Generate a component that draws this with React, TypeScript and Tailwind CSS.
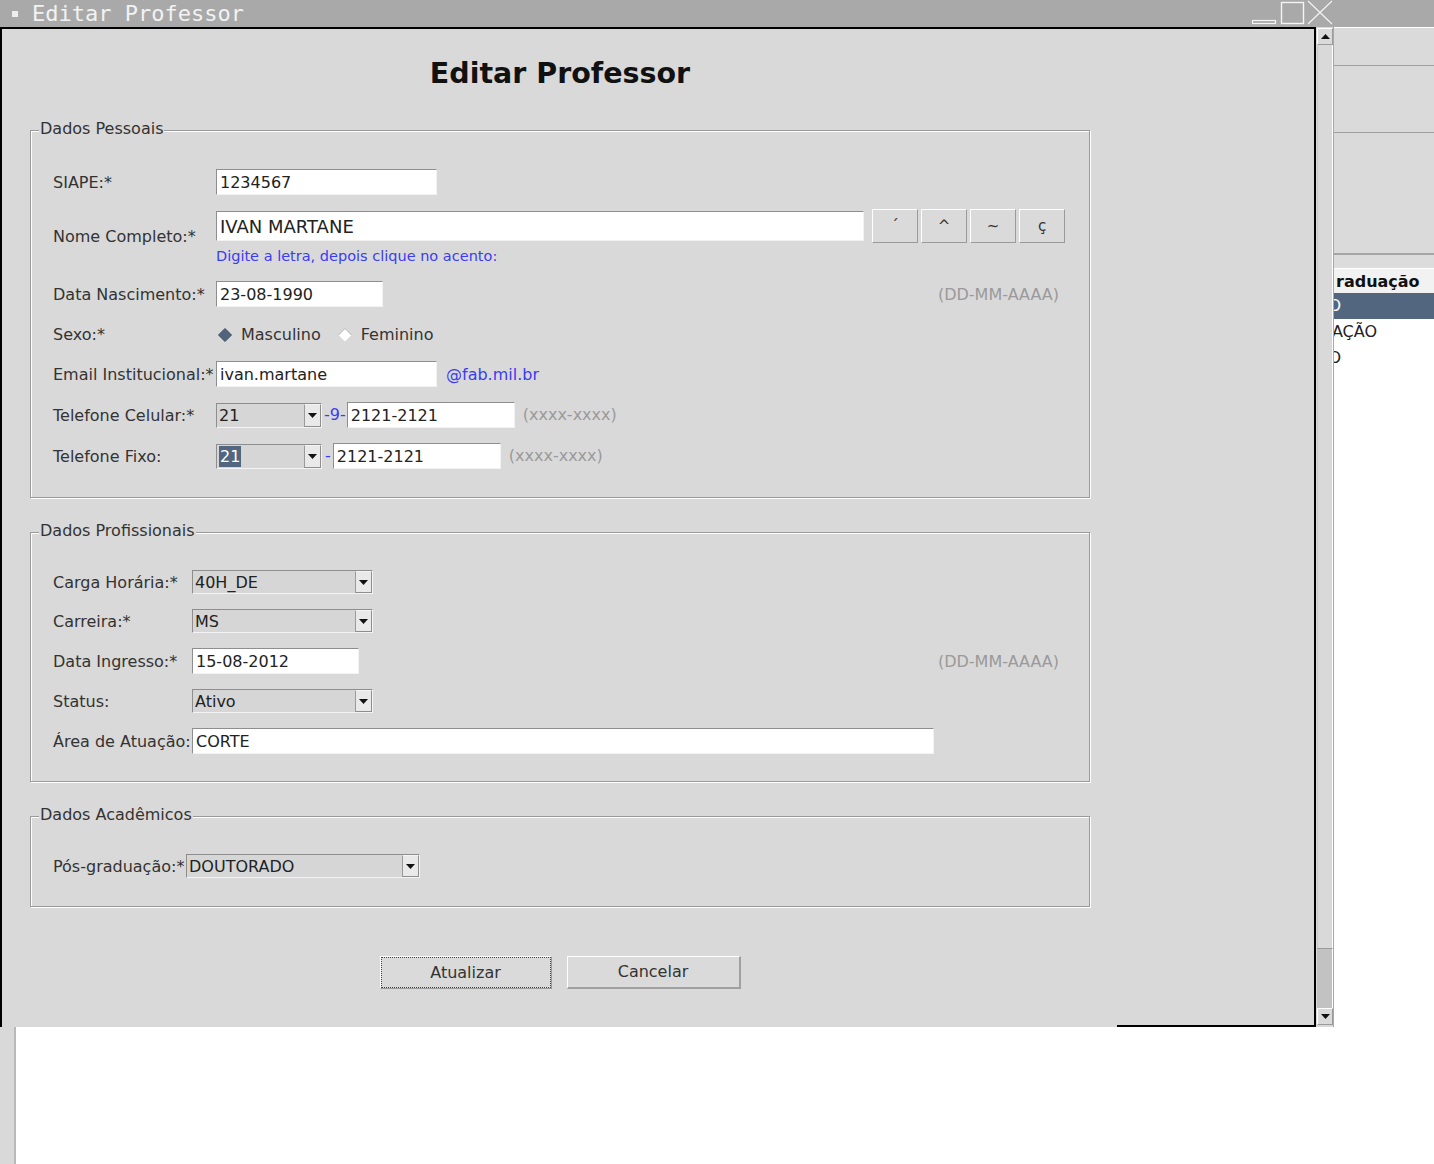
import React from "react";

const Label = ({ className, children }: { className: string; children: React.ReactNode }) => (
  <div className={`shrink-0 text-[16px] text-[#333] whitespace-nowrap pt-[1px] ${className}`}>{children}</div>
);

const Field = ({ className, children }: { className: string; children?: React.ReactNode }) => (
  <div
    className={`flex items-center bg-white border border-t-[#8e8e8e] border-l-[#8e8e8e] border-b-[#f2f2f2] border-r-[#f2f2f2] pl-[3px] pt-[1px] text-[#222] whitespace-nowrap overflow-hidden ${className}`}
  >
    {children}
  </div>
);

const Arrow = ({ up }: { up?: boolean }) => (
  <svg width="9" height="5" viewBox="0 0 9 5">
    <path d={up ? "M0 5h9L4.5 0z" : "M0 0h9L4.5 5z"} fill="#111" />
  </svg>
);

const Combo = ({ className, children }: { className: string; children: React.ReactNode }) => (
  <div
    className={`flex bg-[#d6d6d6] border border-t-[#8e8e8e] border-l-[#8e8e8e] border-b-[#f4f4f4] border-r-[#f4f4f4] ${className}`}
  >
    <div className="flex-1 flex items-center pl-[2px] pt-[1px] text-[16px] text-[#222] overflow-hidden whitespace-nowrap">
      {children}
    </div>
    <div className="w-[17px] flex items-center justify-center bg-[#e9e9e9] border border-[#8e8e8e] border-t-[#f4f4f4] border-l-[#9a9a9a]">
      <Arrow />
    </div>
  </div>
);

const Hint = ({ children }: { children: React.ReactNode }) => (
  <span className="text-[16px] text-[#9a9a9a] whitespace-nowrap">{children}</span>
);

const Blue = ({ className = "", children }: { className?: string; children: React.ReactNode }) => (
  <span className={`text-[#3c3cf0] whitespace-nowrap ${className}`}>{children}</span>
);

const Group = ({
  title,
  className,
  children,
}: {
  title: string;
  className: string;
  children: React.ReactNode;
}) => (
  <div
    className={`relative border border-[#9a9a9a] shadow-[inset_1px_1px_0_#ffffff,1px_1px_0_#ffffff] pl-[22px] ${className}`}
  >
    <span className="absolute left-[8px] top-[-12px] px-[1px] bg-[#d9d9d9] text-[16px] leading-[20px] text-[#333]">
      {title}
    </span>
    {children}
  </div>
);

const Diamond = ({ on }: { on?: boolean }) => (
  <svg width="16" height="16" viewBox="0 0 16 16">
    {on ? (
      <path d="M8 1.5L14.5 8L8 14.5L1.5 8Z" fill="#51647d" stroke="#3f4f63" strokeWidth="1" />
    ) : (
      <>
        <path d="M8 1.5L14.5 8L8 14.5L1.5 8Z" fill="#ffffff" />
        <path d="M1.5 8L8 1.5L14.5 8" fill="none" stroke="#b5b5b5" strokeWidth="1" />
      </>
    )}
  </svg>
);

const AccentButton = ({ children }: { children: React.ReactNode }) => (
  <div className="w-[46px] h-[34px] flex items-center justify-center bg-[#dadada] border border-t-white border-l-white border-b-[#9a9a9a] border-r-[#9a9a9a] text-[15px] text-[#333]">
    {children}
  </div>
);

const Dialog = () => (
  <div className="w-[1316px] h-[1000px] flex flex-col bg-[#d9d9d9] border-l-2 border-t-2 border-r-2 border-black">
    <div className="flex-1 w-[1116px] px-[28px] pt-[28px]">
      <h1 className="h-[34px] leading-[34px] text-center text-[28.5px] font-bold text-[#111]">Editar Professor</h1>

      <Group title="Dados Pessoais" className="mt-[39px] pt-[38px] pb-[28px]">
        <div className="flex items-center h-[26px]">
          <Label className="w-[163px]">SIAPE:*</Label>
          <Field className="w-[221px] h-[26px] text-[16px]">1234567</Field>
        </div>

        <div className="flex items-center mt-[14px] h-[55px]">
          <Label className="w-[163px]">Nome Completo:*</Label>
          <div className="flex flex-col h-full">
            <div className="flex items-center h-[34px]">
              <Field className="w-[648px] h-[30px] text-[18px]">IVAN MARTANE</Field>
              <div className="flex ml-[8px] gap-[3px]">
                <AccentButton>´</AccentButton>
                <AccentButton>^</AccentButton>
                <AccentButton>~</AccentButton>
                <AccentButton>ç</AccentButton>
              </div>
            </div>
            <div className="mt-[5px] h-[17px] leading-[17px] text-[14.5px]">
              <Blue>Digite a letra, depois clique no acento:</Blue>
            </div>
          </div>
        </div>

        <div className="flex items-center mt-[17px] h-[26px] pr-[30px]">
          <Label className="w-[163px]">Data Nascimento:*</Label>
          <Field className="w-[167px] h-[26px] text-[16px]">23-08-1990</Field>
          <div className="ml-auto pt-[1px]">
            <Hint>(DD-MM-AAAA)</Hint>
          </div>
        </div>

        <div className="flex items-center mt-[16px] h-[22px]">
          <Label className="w-[163px]">Sexo:*</Label>
          <div className="flex items-center text-[16px] text-[#333] pt-[1px]">
            <span className="ml-[1px]">
              <Diamond on />
            </span>
            <span className="ml-[8px]">Masculino</span>
            <span className="ml-[16px]">
              <Diamond />
            </span>
            <span className="ml-[8px]">Feminino</span>
          </div>
        </div>

        <div className="flex items-center mt-[16px] h-[26px]">
          <Label className="w-[163px]">Email Institucional:*</Label>
          <Field className="w-[221px] h-[26px] text-[16px]">ivan.martane</Field>
          <Blue className="ml-[9px] text-[16px] pt-[1px]">@fab.mil.br</Blue>
        </div>

        <div className="flex items-center mt-[15px] h-[26px]">
          <Label className="w-[163px]">Telefone Celular:*</Label>
          <Combo className="w-[106px] h-[25px]">21</Combo>
          <Blue className="ml-[2px] text-[16px]">-9-</Blue>
          <Field className="ml-[1px] w-[168px] h-[26px] text-[16px]">2121-2121</Field>
          <span className="ml-[8px]">
            <Hint>(xxxx-xxxx)</Hint>
          </span>
        </div>

        <div className="flex items-center mt-[15px] h-[26px]">
          <Label className="w-[163px]">Telefone Fixo:</Label>
          <Combo className="w-[106px] h-[25px]">
            <span className="bg-[#52667f] text-white px-[1px] leading-[21px]">21</span>
          </Combo>
          <Blue className="ml-[3px] text-[16px]">-</Blue>
          <Field className="ml-[2px] w-[168px] h-[26px] text-[16px]">2121-2121</Field>
          <span className="ml-[8px]">
            <Hint>(xxxx-xxxx)</Hint>
          </span>
        </div>
      </Group>

      <Group title="Dados Profissionais" className="mt-[34px] pt-[37px] pb-[27px]">
        <div className="flex items-center h-[24px]">
          <Label className="w-[139px]">Carga Horária:*</Label>
          <Combo className="w-[181px] h-[24px]">40H_DE</Combo>
        </div>
        <div className="flex items-center mt-[15px] h-[24px]">
          <Label className="w-[139px]">Carreira:*</Label>
          <Combo className="w-[181px] h-[24px]">MS</Combo>
        </div>
        <div className="flex items-center mt-[15px] h-[26px] pr-[30px]">
          <Label className="w-[139px]">Data Ingresso:*</Label>
          <Field className="w-[167px] h-[26px] text-[16px]">15-08-2012</Field>
          <div className="ml-auto pt-[1px]">
            <Hint>(DD-MM-AAAA)</Hint>
          </div>
        </div>
        <div className="flex items-center mt-[15px] h-[24px]">
          <Label className="w-[139px]">Status:</Label>
          <Combo className="w-[181px] h-[24px]">Ativo</Combo>
        </div>
        <div className="flex items-center mt-[15px] h-[26px]">
          <Label className="w-[139px]">Área de Atuação:</Label>
          <Field className="w-[742px] h-[26px] text-[16px]">CORTE</Field>
        </div>
      </Group>

      <Group title="Dados Acadêmicos" className="mt-[34px] pt-[37px] pb-[28px]">
        <div className="flex items-center h-[24px]">
          <Label className="w-[133px]">Pós-graduação:*</Label>
          <Combo className="w-[234px] h-[24px]">DOUTORADO</Combo>
        </div>
      </Group>

      <div className="flex justify-center gap-[15px] mt-[49px]">
        <div className="w-[172px] h-[33px] bg-[#dadada] border border-t-white border-l-white border-b-[#9a9a9a] border-r-[#9a9a9a]">
          <div className="w-full h-full flex items-center justify-center border border-dotted border-[#444] text-[16px] text-[#333]">
            Atualizar
          </div>
        </div>
        <div className="w-[174px] h-[33px] flex items-center justify-center bg-[#dadada] border border-t-white border-l-white border-b-2 border-r-2 border-b-[#a0a0a0] border-r-[#a0a0a0] text-[16px] text-[#333]">
          Cancelar
        </div>
      </div>
    </div>
    <div className="h-[2px] ml-[1115px] bg-black" />
  </div>
);

const Scrollbar = () => (
  <div className="w-[18px] h-[1000px] flex flex-col bg-[#d9d9d9] pl-[1px] border-r border-[#a8a8a8]">
    <div className="mt-[1px] h-[17px] flex items-center justify-center bg-[#dadada] border border-t-white border-l-white border-b-[#9a9a9a] border-r-[#9a9a9a]">
      <Arrow up />
    </div>
    <div className="flex-1 border-l border-[#c8c8c8] border-r border-r-white" />
    <div className="h-[60px] bg-[#c2c2c2] border-t border-[#9a9a9a] border-r border-r-white" />
    <div className="h-[17px] flex items-center justify-center bg-[#dadada] border border-t-white border-l-white border-b-[#9a9a9a] border-r-[#9a9a9a]">
      <Arrow />
    </div>
    <div className="h-[2px]" />
  </div>
);

const BackPanel = () => (
  <div className="flex-1 h-[1000px] flex flex-col bg-white overflow-hidden text-[16px] text-[#222]">
    <div className="h-[38px] bg-[#dadada] border-t border-white" />
    <div className="h-[1px] bg-[#a0a0a0]" />
    <div className="h-[66px] bg-[#dadada]" />
    <div className="h-[1px] bg-[#a0a0a0]" />
    <div className="h-[120px] bg-[#dadada]" />
    <div className="h-[2px] bg-[#a5a5a5]" />
    <div className="h-[13px] bg-[#dcdcdc]" />
    <div className="h-[1px] bg-white" />
    <div className="h-[24px] flex items-center pl-[2px] pt-[2px] bg-[#f2f2f2] font-bold text-[#111]">raduação</div>
    <div className="h-[26px] flex items-center bg-[#52667f] text-white">
      <div className="w-[7px] flex justify-end overflow-hidden whitespace-nowrap">DOUTORADO</div>
    </div>
    <div className="h-[26px] flex items-center">
      <div className="w-[43px] flex justify-end overflow-hidden whitespace-nowrap">ESPECIALIZAÇÃO</div>
    </div>
    <div className="h-[26px] flex items-center">
      <div className="w-[7px] flex justify-end overflow-hidden whitespace-nowrap">MESTRADO</div>
    </div>
  </div>
);

const TitleBar = () => (
  <div className="h-[27px] flex items-center bg-[#a9a9a9]">
    <div className="ml-[12px] w-[6px] h-[6px] bg-[#eeeeee]" />
    <span className="ml-[14px] font-['DejaVu_Sans_Mono',monospace] text-[22px] leading-[27px] text-[#f2f2f2]">
      Editar Professor
    </span>
    <svg className="ml-auto mr-[101px]" width="81" height="27" viewBox="0 0 81 27">
      <rect x="0.5" y="20.5" width="23" height="3" fill="none" stroke="#f5f5f5" strokeWidth="1.2" />
      <rect x="29.5" y="2.5" width="22" height="21" fill="none" stroke="#f5f5f5" strokeWidth="1.4" />
      <path d="M56 1L80 24M80 1L56 24" stroke="#f5f5f5" strokeWidth="1.1" />
    </svg>
  </div>
);

export default function App() {
  return (
    <div className="w-[1434px] h-[1164px] flex flex-col bg-white overflow-hidden font-['DejaVu_Sans',sans-serif]">
      <TitleBar />
      <div className="flex">
        <Dialog />
        <Scrollbar />
        <BackPanel />
      </div>
      <div className="flex flex-1">
        <div className="w-[16px] bg-[#d9d9d9] border-r-2 border-[#b8b8b8]" />
        <div className="flex-1 bg-white" />
      </div>
    </div>
  );
}
